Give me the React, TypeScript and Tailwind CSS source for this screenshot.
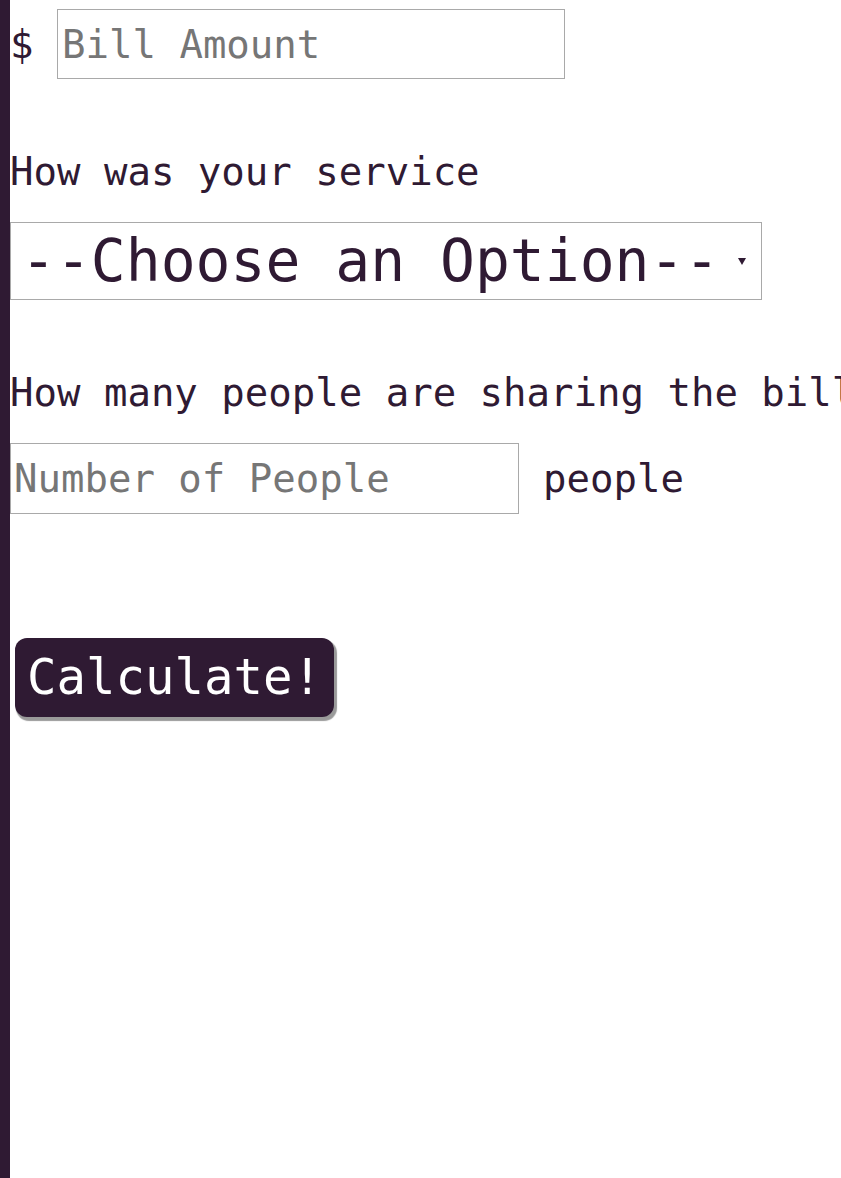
import React from 'react';

const App: React.FC = () => {
  return (
    <div className="flex min-h-screen overflow-hidden bg-white font-['DejaVu_Sans_Mono',monospace] text-[#2f1a33]">
      <div className="w-[10px] shrink-0 bg-[#2f1a33]" />
      <div className="flex flex-col">
        {/* bill amount */}
        <div className="mt-[9px] flex h-[70px] items-center">
          <span className="w-[47px] text-[39px] leading-[45px]">$</span>
          <input
            type="text"
            placeholder="Bill Amount"
            className="h-[70px] w-[508px] border border-[#a9a9a9] bg-white px-[4px] text-[39px] outline-none placeholder:text-[#767676]"
          />
        </div>

        <p className="mt-[70px] whitespace-nowrap text-[39px] leading-[45px]">How was your service</p>

        <div className="relative mt-[28px] w-[752px]">
          <select className="h-[78px] w-full appearance-none border border-[#a9a9a9] bg-white pl-[10px] text-[58px] leading-[70px] text-[#2f1a33] outline-none">
            <option>--Choose an Option--</option>
            <option>30% - Outstanding</option>
            <option>20% - Good</option>
            <option>15% - It was OK</option>
            <option>10% - Bad</option>
            <option>5% - Terrible</option>
          </select>
          <span className="pointer-events-none absolute right-[16px] top-[36px] h-0 w-0 border-x-[4px] border-t-[7px] border-x-transparent border-t-[#2f1a33]" />
        </div>

        <p className="mt-[70px] whitespace-nowrap text-[39px] leading-[45px]">How many people are sharing the bill?</p>

        <div className="mt-[28px] flex items-center">
          <input
            type="text"
            placeholder="Number of People"
            className="h-[71px] w-[509px] border border-[#a9a9a9] bg-white px-[3px] text-[39px] outline-none placeholder:text-[#767676]"
          />
          <span className="ml-[24px] text-[39px] leading-[45px]">people</span>
        </div>

        <div className="mt-[124px] ml-[5px]">
          <button className="h-[79px] rounded-[12px] bg-[#2f1a33] px-[12px] text-[49px] leading-[56px] text-white shadow-[2px_3px_1px_1px_#9a9a9a]">
            Calculate!
          </button>
        </div>
      </div>
    </div>
  );
};

export default App;
